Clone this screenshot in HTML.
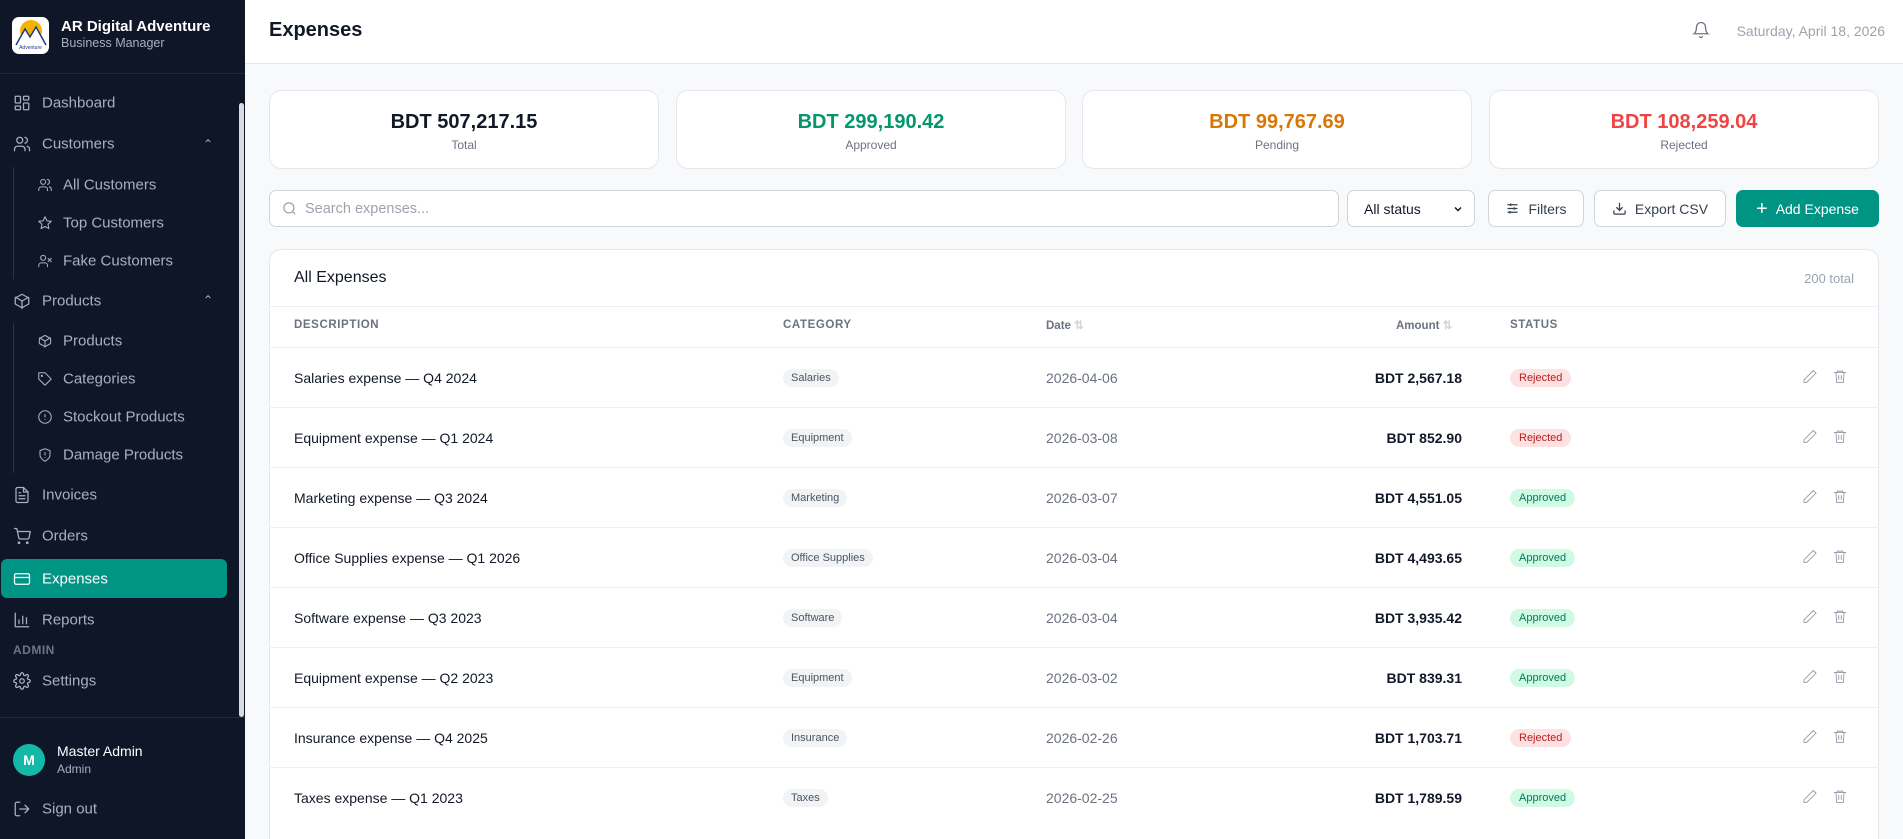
<!DOCTYPE html>
<html style="width:1903px;height:839px;overflow:hidden"><head><meta charset="utf-8"><style>
*{box-sizing:border-box;margin:0;padding:0}
body{width:1903px;height:839px;overflow:hidden;font-family:"Liberation Sans",sans-serif;background:#f8f9fb;position:relative;color:#111827}
.sb{position:absolute;left:0;top:0;width:245px;height:839px;background:#0e1628;color:#9ca3af;z-index:2}
.abs{position:absolute}
.nav{position:absolute;left:42px;font-size:15px;color:#a7b0bf;transform:translateY(-50%)}
.sub{left:63px}
.ic{position:absolute;transform:translate(-50%,-50%);width:18px;height:18px}
.ic svg{width:100%;height:100%;fill:none;stroke:#a7b0bf;stroke-width:1.7;stroke-linecap:round;stroke-linejoin:round}
.hdr{position:absolute;left:245px;top:0;right:0;height:64px;background:#fff;border-bottom:1px solid #e5e7eb}
.card{position:absolute;top:90px;height:79px;background:#fff;border:1px solid #e5e7eb;border-radius:12px;text-align:center}
.card b{display:block;font-size:20px;margin-top:20px}
.card span{display:block;font-size:12px;color:#6b7280;margin-top:4px}
.btn{position:absolute;top:190px;height:37px;border:1px solid #d1d5db;border-radius:7px;background:#fff;font-size:14px;color:#374151;display:flex;align-items:center;justify-content:center;gap:8px}
.tbl{position:absolute;left:269px;top:249px;width:1610px;height:640px;background:#fff;border:1px solid #e5e7eb;border-radius:12px}
.row{position:absolute;left:0;right:0;height:60px;border-top:1px solid #eef0f3;font-size:14px}
.row>*{position:absolute;top:50%;transform:translateY(-50%)}
.chip{background:#f1f3f5;color:#4b5563;font-size:11px;padding:3px 8px;border-radius:10px}
.st{font-size:11px;padding:3px 9px;border-radius:10px}
.rej{background:#fee2e2;color:#b91c1c}
.app{background:#d1fae5;color:#047857}
.th{position:absolute;top:325px;font-size:11.5px;color:#6b7280;letter-spacing:.6px;font-weight:bold;transform:translateY(-50%)}
.act svg{width:16px;height:16px;fill:none;stroke:#9ca3af;stroke-width:1.5}
</style></head><body>
<div class="sb">
 <div class="abs" style="left:12px;top:17px;width:37px;height:37px;background:#fff;border-radius:7px;overflow:hidden">
  <svg width="37" height="37" viewBox="0 0 37 37"><circle cx="19" cy="14" r="11" fill="#f5b301"/><path d="M4 28 L13 12 L18 20 L24 10 L34 28" fill="#fff" stroke="#1e3a8a" stroke-width="1.5"/><text x="18.5" y="32" font-size="5" text-anchor="middle" fill="#1e3a8a" font-family="Liberation Sans">Adventure</text></svg>
 </div>
 <div class="abs" style="left:61px;top:18px;font-size:15px;font-weight:bold;color:#fff">AR Digital Adventure</div>
 <div class="abs" style="left:61px;top:36px;font-size:12.5px;color:#a7b0bf">Business Manager</div>
 <div class="abs" style="left:0;top:73px;width:245px;height:1px;background:#1f2a3d"></div>
 <div class="abs" style="left:239px;top:103px;width:5px;height:614px;background:#d8dbe2;border-radius:3px"></div>
 <div class="abs" style="left:13px;top:167px;width:1px;height:112px;background:#2a3447"></div>
 <div class="abs" style="left:13px;top:323px;width:1px;height:150px;background:#2a3447"></div>
 <div class="abs" style="left:1px;top:559px;width:226px;height:39px;background:#009485;border-radius:6px"></div>

 <div class="ic" style="left:22px;top:103px"><svg viewBox="0 0 24 24"><rect x="3" y="3" width="7" height="9" rx="1"/><rect x="14" y="3" width="7" height="5" rx="1"/><rect x="14" y="12" width="7" height="9" rx="1"/><rect x="3" y="16" width="7" height="5" rx="1"/></svg></div>
 <div class="nav" style="top:103px">Dashboard</div>
 <div class="ic" style="left:22px;top:144px"><svg viewBox="0 0 24 24"><circle cx="9" cy="7" r="4"/><path d="M2 21v-2a4 4 0 0 1 4-4h6a4 4 0 0 1 4 4v2M16 3.1a4 4 0 0 1 0 7.8M22 21v-2a4 4 0 0 0-3-3.9"/></svg></div>
 <div class="nav" style="top:144px">Customers</div>
 <div class="abs" style="left:203px;top:137px;color:#a7b0bf;font-size:12px">&#8963;</div>
 <div class="ic" style="left:45px;top:185px;width:15px"><svg viewBox="0 0 24 24"><circle cx="9" cy="7" r="4"/><path d="M2 21v-2a4 4 0 0 1 4-4h6a4 4 0 0 1 4 4v2M16 3.1a4 4 0 0 1 0 7.8M22 21v-2a4 4 0 0 0-3-3.9"/></svg></div>
 <div class="nav sub" style="top:185px">All Customers</div>
 <div class="ic" style="left:45px;top:223px;width:15px"><svg viewBox="0 0 24 24"><path d="M12 2l3 6.5 7 .8-5.2 4.8 1.5 7L12 17.5 5.7 21l1.5-7L2 9.3l7-.8z"/></svg></div>
 <div class="nav sub" style="top:223px">Top Customers</div>
 <div class="ic" style="left:45px;top:261px;width:15px"><svg viewBox="0 0 24 24"><circle cx="9" cy="7" r="4"/><path d="M2 21v-2a4 4 0 0 1 4-4h6a4 4 0 0 1 4 4v2M17 8l5 5M22 8l-5 5"/></svg></div>
 <div class="nav sub" style="top:261px">Fake Customers</div>
 <div class="ic" style="left:22px;top:301px"><svg viewBox="0 0 24 24"><path d="M21 16V8l-9-5-9 5v8l9 5z"/><path d="M3.3 7L12 12l8.7-5M12 22V12"/></svg></div>
 <div class="nav" style="top:301px">Products</div>
 <div class="abs" style="left:203px;top:293px;color:#a7b0bf;font-size:12px">&#8963;</div>
 <div class="ic" style="left:45px;top:341px;width:15px"><svg viewBox="0 0 24 24"><path d="M21 16V8l-9-5-9 5v8l9 5z"/><path d="M3.3 7L12 12l8.7-5M12 22V12"/></svg></div>
 <div class="nav sub" style="top:341px">Products</div>
 <div class="ic" style="left:45px;top:379px;width:15px"><svg viewBox="0 0 24 24"><path d="M12 2H2v10l9.3 9.3a1 1 0 0 0 1.4 0l8.6-8.6a1 1 0 0 0 0-1.4z"/><circle cx="7" cy="7" r="1"/></svg></div>
 <div class="nav sub" style="top:379px">Categories</div>
 <div class="ic" style="left:45px;top:417px;width:15px"><svg viewBox="0 0 24 24"><circle cx="12" cy="12" r="10"/><path d="M12 8v4M12 16h.01"/></svg></div>
 <div class="nav sub" style="top:417px">Stockout Products</div>
 <div class="ic" style="left:45px;top:455px;width:15px"><svg viewBox="0 0 24 24"><path d="M12 22s8-4 8-10V5l-8-3-8 3v7c0 6 8 10 8 10zM12 8v4M12 16h.01"/></svg></div>
 <div class="nav sub" style="top:455px">Damage Products</div>
 <div class="ic" style="left:22px;top:495px"><svg viewBox="0 0 24 24"><path d="M14 2H6a2 2 0 0 0-2 2v16a2 2 0 0 0 2 2h12a2 2 0 0 0 2-2V8z"/><path d="M14 2v6h6M8 13h8M8 17h8M8 9h2"/></svg></div>
 <div class="nav" style="top:495px">Invoices</div>
 <div class="ic" style="left:22px;top:536px"><svg viewBox="0 0 24 24"><circle cx="8" cy="21" r="1"/><circle cx="19" cy="21" r="1"/><path d="M2 2h3l2.7 12.4a2 2 0 0 0 2 1.6h9.7a2 2 0 0 0 2-1.6L23 6H6"/></svg></div>
 <div class="nav" style="top:536px">Orders</div>
 <div class="ic" style="left:22px;top:579px"><svg viewBox="0 0 24 24" style="stroke:#fff"><rect x="2" y="5" width="20" height="14" rx="2"/><path d="M2 10h20"/></svg></div>
 <div class="nav" style="top:579px;color:#fff">Expenses</div>
 <div class="ic" style="left:22px;top:620px"><svg viewBox="0 0 24 24"><path d="M3 3v18h18M8 17v-5M13 17V7M18 17v-8"/></svg></div>
 <div class="nav" style="top:620px">Reports</div>
 <div class="abs" style="left:13px;top:643px;font-size:12px;font-weight:bold;color:#6b7588;letter-spacing:.5px">ADMIN</div>
 <div class="ic" style="left:22px;top:681px"><svg viewBox="0 0 24 24"><circle cx="12" cy="12" r="3"/><path d="M19.4 15a1.7 1.7 0 0 0 .3 1.8l.1.1a2 2 0 1 1-2.8 2.8l-.1-.1a1.7 1.7 0 0 0-2.9 1.2V21a2 2 0 1 1-4 0v-.1a1.7 1.7 0 0 0-2.9-1.2l-.1.1a2 2 0 1 1-2.8-2.8l.1-.1a1.7 1.7 0 0 0-1.200-2.9H3a2 2 0 1 1 0-4h.1a1.7 1.7 0 0 0 1.2-2.9l-.1-.1a2 2 0 1 1 2.8-2.8l.1.1a1.7 1.7 0 0 0 2.9-1.2V3a2 2 0 1 1 4 0v.1a1.7 1.7 0 0 0 2.9 1.2l.1-.1a2 2 0 1 1 2.8 2.8l-.1.1a1.7 1.7 0 0 0 1.2 2.9H21a2 2 0 1 1 0 4h-.1a1.7 1.7 0 0 0-1.5 1z"/></svg></div>
 <div class="nav" style="top:681px">Settings</div>
 <div class="abs" style="left:0;top:717px;width:245px;height:1px;background:#1f2a3d"></div>
 <div class="abs" style="left:13px;top:744px;width:32px;height:32px;border-radius:50%;background:#14b8a6;color:#fff;font-weight:bold;font-size:14px;text-align:center;line-height:32px">M</div>
 <div class="abs" style="left:57px;top:743px;font-size:14px;color:#fff">Master Admin</div>
 <div class="abs" style="left:57px;top:762px;font-size:12px;color:#a7b0bf">Admin</div>
 <div class="ic" style="left:22px;top:809px"><svg viewBox="0 0 24 24"><path d="M9 21H5a2 2 0 0 1-2-2V5a2 2 0 0 1 2-2h4M16 17l5-5-5-5M21 12H9"/></svg></div>
 <div class="nav" style="top:809px">Sign out</div>
</div>

<div class="hdr">
 <div class="abs" style="left:24px;top:19px;font-size:20px;font-weight:bold;color:#111827">Expenses</div>
 <svg class="abs" style="left:1447px;top:21px" width="18" height="18" viewBox="0 0 24 24" fill="none" stroke="#6b7280" stroke-width="1.8" stroke-linecap="round"><path d="M6 8a6 6 0 0 1 12 0c0 7 3 9 3 9H3s3-2 3-9M10.3 21a1.9 1.9 0 0 0 3.4 0"/></svg>
 <div class="abs" style="right:18px;top:23px;font-size:14px;color:#9ca3af">Saturday, April 18, 2026</div>
</div>

<div class="card" style="left:269px;width:390px"><b>BDT 507,217.15</b><span>Total</span></div>
<div class="card" style="left:676px;width:390px"><b style="color:#059669">BDT 299,190.42</b><span>Approved</span></div>
<div class="card" style="left:1082px;width:390px"><b style="color:#d97706">BDT 99,767.69</b><span>Pending</span></div>
<div class="card" style="left:1489px;width:390px"><b style="color:#ef4444">BDT 108,259.04</b><span>Rejected</span></div>

<div class="btn" style="left:269px;width:1070px;justify-content:flex-start;padding-left:12px;color:#9ca3af;font-size:14.5px">
 <svg width="15" height="15" viewBox="0 0 24 24" fill="none" stroke="#9ca3af" stroke-width="2"><circle cx="11" cy="11" r="8"/><path d="M21 21l-4.3-4.3"/></svg>Search expenses...</div>
<div class="btn" style="left:1347px;width:128px;justify-content:space-between;padding:0 10px 0 16px;color:#111827">All status<svg width="12" height="12" viewBox="0 0 24 24" fill="none" stroke="#111827" stroke-width="3"><path d="M6 9l6 6 6-6"/></svg></div>
<div class="btn" style="left:1488px;width:96px"><svg width="15" height="15" viewBox="0 0 24 24" fill="none" stroke="#374151" stroke-width="2"><path d="M4 6h16M4 12h16M4 18h16M9 4v4M15 10v4M8 16v4"/></svg>Filters</div>
<div class="btn" style="left:1594px;width:132px"><svg width="15" height="15" viewBox="0 0 24 24" fill="none" stroke="#374151" stroke-width="2"><path d="M21 15v4a2 2 0 0 1-2 2H5a2 2 0 0 1-2-2v-4M7 10l5 5 5-5M12 15V3"/></svg>Export CSV</div>
<div class="btn" style="left:1736px;width:143px;background:#009485;border-color:#009485;color:#fff"><span style="font-size:20px;font-weight:300;line-height:1">+</span>Add Expense</div>

<div class="tbl">
 <div class="abs" style="left:24px;top:19px;font-size:16px;color:#111827">All Expenses</div>
 <div class="abs" style="right:24px;top:21px;font-size:13px;color:#9ca3af">200 total</div>
 <div class="abs" style="left:0;right:0;top:56px;height:1px;background:#eef0f3"></div>
</div>
<div class="th" style="left:294px">DESCRIPTION</div>
<div class="th" style="left:783px">CATEGORY</div>
<div class="th" style="left:1046px;letter-spacing:0">Date <span style="color:#d1d5db">⇅</span></div>
<div class="th" style="left:1396px;letter-spacing:0">Amount <span style="color:#d1d5db">⇅</span></div>
<div class="th" style="left:1510px">STATUS</div>

<div style="position:absolute;left:269px;top:347px;width:1610px">
<div class="row" style="top:0"><span style="left:25px">Salaries expense — Q4 2024</span><span class="chip" style="left:514px">Salaries</span><span style="left:777px;color:#6b7280">2026-04-06</span><b style="right:417px">BDT 2,567.18</b><span class="st rej" style="left:1241px">Rejected</span><span class="act" style="left:1533px"><svg viewBox="0 0 24 24"><path d="M17 3l4 4L7 21H3v-4z"/></svg></span><span class="act" style="left:1563px"><svg viewBox="0 0 24 24"><path d="M3 6h18M8 6V4h8v2M6 6l1 15h10l1-15M10 10v7M14 10v7"/></svg></span></div>
<div class="row" style="top:60px"><span style="left:25px">Equipment expense — Q1 2024</span><span class="chip" style="left:514px">Equipment</span><span style="left:777px;color:#6b7280">2026-03-08</span><b style="right:417px">BDT 852.90</b><span class="st rej" style="left:1241px">Rejected</span><span class="act" style="left:1533px"><svg viewBox="0 0 24 24"><path d="M17 3l4 4L7 21H3v-4z"/></svg></span><span class="act" style="left:1563px"><svg viewBox="0 0 24 24"><path d="M3 6h18M8 6V4h8v2M6 6l1 15h10l1-15M10 10v7M14 10v7"/></svg></span></div>
<div class="row" style="top:120px"><span style="left:25px">Marketing expense — Q3 2024</span><span class="chip" style="left:514px">Marketing</span><span style="left:777px;color:#6b7280">2026-03-07</span><b style="right:417px">BDT 4,551.05</b><span class="st app" style="left:1241px">Approved</span><span class="act" style="left:1533px"><svg viewBox="0 0 24 24"><path d="M17 3l4 4L7 21H3v-4z"/></svg></span><span class="act" style="left:1563px"><svg viewBox="0 0 24 24"><path d="M3 6h18M8 6V4h8v2M6 6l1 15h10l1-15M10 10v7M14 10v7"/></svg></span></div>
<div class="row" style="top:180px"><span style="left:25px">Office Supplies expense — Q1 2026</span><span class="chip" style="left:514px">Office Supplies</span><span style="left:777px;color:#6b7280">2026-03-04</span><b style="right:417px">BDT 4,493.65</b><span class="st app" style="left:1241px">Approved</span><span class="act" style="left:1533px"><svg viewBox="0 0 24 24"><path d="M17 3l4 4L7 21H3v-4z"/></svg></span><span class="act" style="left:1563px"><svg viewBox="0 0 24 24"><path d="M3 6h18M8 6V4h8v2M6 6l1 15h10l1-15M10 10v7M14 10v7"/></svg></span></div>
<div class="row" style="top:240px"><span style="left:25px">Software expense — Q3 2023</span><span class="chip" style="left:514px">Software</span><span style="left:777px;color:#6b7280">2026-03-04</span><b style="right:417px">BDT 3,935.42</b><span class="st app" style="left:1241px">Approved</span><span class="act" style="left:1533px"><svg viewBox="0 0 24 24"><path d="M17 3l4 4L7 21H3v-4z"/></svg></span><span class="act" style="left:1563px"><svg viewBox="0 0 24 24"><path d="M3 6h18M8 6V4h8v2M6 6l1 15h10l1-15M10 10v7M14 10v7"/></svg></span></div>
<div class="row" style="top:300px"><span style="left:25px">Equipment expense — Q2 2023</span><span class="chip" style="left:514px">Equipment</span><span style="left:777px;color:#6b7280">2026-03-02</span><b style="right:417px">BDT 839.31</b><span class="st app" style="left:1241px">Approved</span><span class="act" style="left:1533px"><svg viewBox="0 0 24 24"><path d="M17 3l4 4L7 21H3v-4z"/></svg></span><span class="act" style="left:1563px"><svg viewBox="0 0 24 24"><path d="M3 6h18M8 6V4h8v2M6 6l1 15h10l1-15M10 10v7M14 10v7"/></svg></span></div>
<div class="row" style="top:360px"><span style="left:25px">Insurance expense — Q4 2025</span><span class="chip" style="left:514px">Insurance</span><span style="left:777px;color:#6b7280">2026-02-26</span><b style="right:417px">BDT 1,703.71</b><span class="st rej" style="left:1241px">Rejected</span><span class="act" style="left:1533px"><svg viewBox="0 0 24 24"><path d="M17 3l4 4L7 21H3v-4z"/></svg></span><span class="act" style="left:1563px"><svg viewBox="0 0 24 24"><path d="M3 6h18M8 6V4h8v2M6 6l1 15h10l1-15M10 10v7M14 10v7"/></svg></span></div>
<div class="row" style="top:420px"><span style="left:25px">Taxes expense — Q1 2023</span><span class="chip" style="left:514px">Taxes</span><span style="left:777px;color:#6b7280">2026-02-25</span><b style="right:417px">BDT 1,789.59</b><span class="st app" style="left:1241px">Approved</span><span class="act" style="left:1533px"><svg viewBox="0 0 24 24"><path d="M17 3l4 4L7 21H3v-4z"/></svg></span><span class="act" style="left:1563px"><svg viewBox="0 0 24 24"><path d="M3 6h18M8 6V4h8v2M6 6l1 15h10l1-15M10 10v7M14 10v7"/></svg></span></div>
</div>
</body></html>
